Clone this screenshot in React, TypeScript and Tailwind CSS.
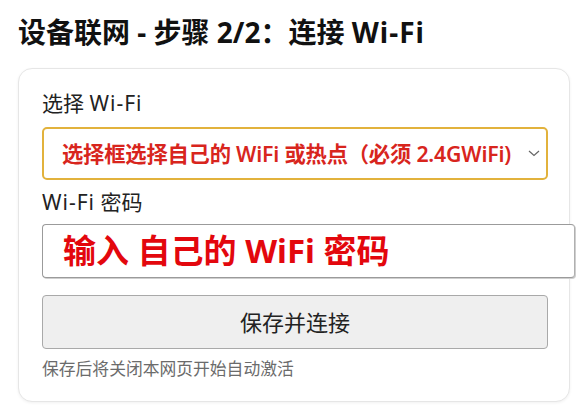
const font = "font-['Noto_Sans','Noto_Sans_CJK_SC',sans-serif]";

const App = () => {
  return (
    <div className={`${font} min-h-screen bg-white px-[18px] pt-[14px]`}>
      <h1 className="text-[28px] leading-[36px] font-bold text-[#111]">
        设备联网 - 步骤 2/2：连接 <span className="tracking-[1px]">Wi-Fi</span>
      </h1>

      <div className="mt-[18px] w-[552px] rounded-[14px] border border-[#e6e6e6] bg-white pl-[23px] pt-[20px] pb-[21px] shadow-[0_1px_3px_rgba(0,0,0,0.06)]">
        <label className="block text-[21px] leading-[28px] text-[#222]">
          选择 <span className="tracking-[1px]">Wi-Fi</span>
        </label>
        <div className="mt-[10px] flex h-[53px] w-[506px] items-center justify-between rounded-[5px] border-2 border-[#e2b23c] bg-white pl-[18px] pr-[6px]">
          <span className="text-[21.3px] font-semibold tracking-[-0.2px] text-[#d8251d] whitespace-nowrap">
            选择框选择自己的 WiFi 或热点（必须 2.4GWiFi)
          </span>
          <svg width="12" height="7" viewBox="0 0 12 7" fill="none">
            <path d="M1 1l5 4.5L11 1" stroke="#666" strokeWidth="1.2" />
          </svg>
        </div>

        <label className="mt-[8px] block text-[21px] leading-[28px] text-[#222]">
          <span className="tracking-[1px]">Wi-Fi</span> 密码
        </label>
        <div className="mt-[8px] flex h-[54px] w-[533px] items-center rounded-[4px] border border-[#9b9b9b] border-r-[#b0b0b0] shadow-[1px_1px_0_#cfcfcf] bg-white pl-[20px]">
          <span className="text-[33px] font-bold text-[#e3070d] whitespace-nowrap">
            输入 自己的 WiFi 密码
          </span>
        </div>

        <button className="mt-[17px] flex h-[54px] w-[506px] items-center justify-center rounded-[4px] border border-[#a9a9a9] bg-[#efefef] text-[22px] text-[#222]">
          保存并连接
        </button>

        <p className="mt-[9px] text-[16.8px] leading-[22px] text-[#6b6b6b]">
          保存后将关闭本网页开始自动激活
        </p>
      </div>
    </div>
  );
};

export default App;
